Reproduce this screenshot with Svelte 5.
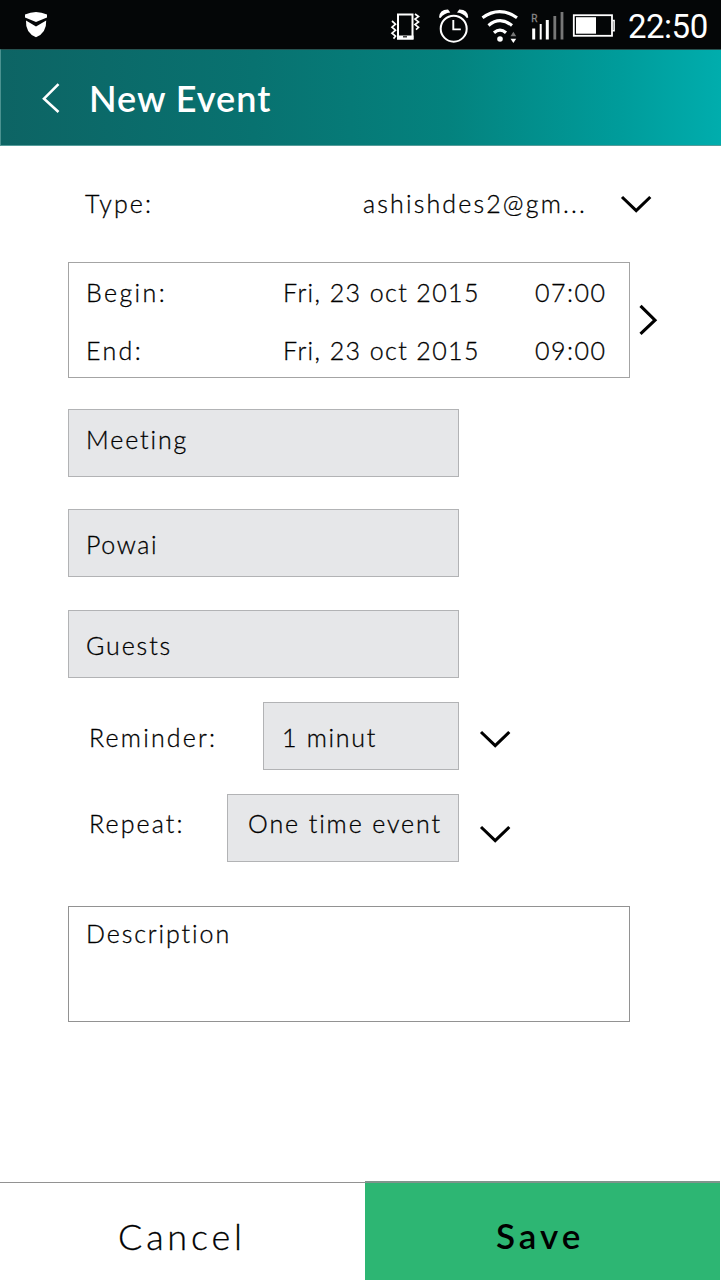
<script>
  const schedule = [
    { label: 'Begin:', date: 'Fri, 23 oct 2015', time: '07:00' },
    { label: 'End:', date: 'Fri, 23 oct 2015', time: '09:00' }
  ];
</script>

{#snippet chevron()}
  <svg class="chevron" width="32" height="20" viewBox="0 0 32 20">
    <path d="M2 2 L16.2 15.5 L30.3 2" fill="none" stroke="#000" stroke-width="3.1" />
  </svg>
{/snippet}

<div class="screen">
  <div class="status">
    <svg class="shield" width="24" height="28" viewBox="0 0 24 28" fill="#fff">
      <path d="M1 3.6 Q12 -1.4 23 3.6 V6.6 L12 11 L1 6.6 Z" />
      <path d="M2 9.4 L12 15.6 L22.2 9.4 Q22.8 21.5 12 26.3 Q1.2 21.5 2 9.4 Z" />
    </svg>
    <svg class="icons" width="230" height="36" viewBox="390 8 230 36" fill="none" stroke="#fff">
      <rect x="398" y="14.5" width="14.5" height="24" stroke-width="2" />
      <path d="M397 35.5h16.5v4h-16.5z" fill="#fff" stroke="none" />
      <path d="M403 36.8h4" stroke="#222" stroke-width="1.3" />
      <path d="M392 21l3.5 3.2-3.5 3 3.5 3-3.5 3 3.5 3-2 2.4M415 14l3.5 2.6-3.5 2.5 3.5 2.8-3.5 2.7 3.5 2.8-2.5 2.2" stroke-width="1.7" />
      <circle cx="453.7" cy="28.7" r="13" stroke-width="2" />
      <path d="M453.3 20v9.4h7.5" stroke-width="1.9" />
      <path d="M439 17.5Q439.5 9.5 448 9.6L450.3 12.5Q444 13 440.5 18Z" fill="#fff" stroke="none" />
      <path d="M468.3 17.5Q467.8 9.5 459.3 9.6L457 12.5Q463.3 13 466.8 18Z" fill="#fff" stroke="none" />
      <path d="M482.5 17.7Q499.5 5.5 517 17.7" stroke-width="3.2" />
      <path d="M488.5 25.4Q500 16 512 25.4M494 32.8Q500 27.5 506 32.8" stroke-width="3.2" />
      <circle cx="500" cy="39" r="2.8" fill="#fff" stroke="none" />
      <path d="M510.5 36.2h5.7l-2.8-4.5z" fill="#777" stroke="none" />
      <path d="M510.5 38.8h5.7l-2.8 4.2z" fill="#fff" stroke="none" />
      <path d="M533.7 28.5v11M547.3 20v19.5" stroke-width="3" />
      <path d="M540.7 24v15.5" stroke-width="2" />
      <path d="M554.8 16v23.5M562 12v27.5" stroke="#777" stroke-width="2.8" />
      <text x="531.3" y="22" class="roaming">R</text>
      <rect x="573.8" y="15.2" width="38.2" height="20.6" stroke-width="1.8" />
      <path d="M576 17.2h20v16.5h-20z" fill="#fff" stroke="none" />
      <path d="M612.5 20.4h1.6v10.4h-1.6" stroke-width="1.5" />
    </svg>
    <span class="clock">22:50</span>
  </div>

  <header>
    <svg width="20" height="32" viewBox="0 0 20 32">
      <path d="M17.5 2.2 L3 16.6 L17.5 30" fill="none" stroke="#fff" stroke-width="2.6" />
    </svg>
    <h1>New Event</h1>
  </header>

  <main>
    <div class="type">
      <span class="type-label">Type:</span>
      <span class="account">ashishdes2@gm...</span>
      {@render chevron()}
    </div>

    <div class="schedule">
      <div class="box times">
        {#each schedule as row}
          <div class="time-row">
            <span class="row-label">{row.label}</span>
            <span class="date">{row.date}</span>
            <span class="time">{row.time}</span>
          </div>
        {/each}
      </div>
      <svg width="19" height="32" viewBox="0 0 19 32">
        <path d="M1.5 1.8 L16 16.2 L1.5 29.8" fill="none" stroke="#000" stroke-width="3.1" />
      </svg>
    </div>

    <div class="field meeting"><span>Meeting</span></div>
    <div class="field powai"><span>Powai</span></div>
    <div class="field guests"><span>Guests</span></div>

    <div class="choice reminder">
      <span class="label">Reminder:</span>
      <div class="field"><span>1 minut</span></div>
      {@render chevron()}
    </div>
    <div class="choice repeat">
      <span class="label">Repeat:</span>
      <div class="field"><span>One time event</span></div>
      {@render chevron()}
    </div>

    <div class="box description"><span>Description</span></div>
  </main>

  <footer>
    <div class="cancel">Cancel</div>
    <div class="save">Save</div>
  </footer>
</div>

<style>
  :global(body) { margin: 0; background: #fff; }
  .screen {
    display: flex; flex-direction: column; box-sizing: border-box;
    width: 721px; height: 1280px; overflow: hidden; background: #fff; color: #000;
    font: 300 25px/30px Lato, sans-serif; letter-spacing: 1.9px; white-space: nowrap;
  }
  .screen svg { display: block; flex: none; }
  .status { display: flex; flex: none; box-sizing: border-box; height: 49px; padding: 8px 0 0 24px; background: #040607; color: #fff; }
  .shield { margin-top: 3px; }
  .icons { margin-left: 342px; }
  .roaming { font: 10px Roboto, sans-serif; letter-spacing: 0; fill: #888; stroke: #888; stroke-width: .3; }
  .clock { margin-left: 8px; font: 400 33px/38px Roboto, sans-serif; letter-spacing: -.5px; }
  header {
    display: flex; flex: none; box-sizing: border-box; height: 97px; padding: 32px 0 0 40px;
    border-left: 1px solid #4b9290; border-bottom: 1px solid #559c9a; border-top: 1px solid #26514f;
    background: linear-gradient(90deg, #0d6464 0%, #087270 35%, #04827e 62%, #009c9b 86%, #00adad 100%);
    color: #fff;
  }
  h1 { margin: -5px 0 0 28px; font: 600 36px/43px Lato, sans-serif; letter-spacing: 1px; }
  main {
    display: flex; flex: 1; flex-direction: column; padding: 42px 0 0 68px;
    -webkit-text-stroke: .3px #000;
  }
  .type { display: flex; height: 74px; }
  .type-label { width: 278px; padding-left: 17px; letter-spacing: 2.1px; }
  .account { width: 257px; letter-spacing: 2.15px; }
  .type .chevron { margin-top: 7px; }
  .schedule { display: flex; align-items: center; gap: 9px; }
  .box { box-sizing: border-box; width: 562px; height: 116px; border: 1px solid #a4a4a4; }
  .times { padding: 14px 0 0 17px; }
  .time-row { display: grid; grid-template-columns: 197px 252px auto; height: 58px; }
  .row-label { letter-spacing: 2.4px; }
  .date { letter-spacing: 1.4px; }
  .time { letter-spacing: 1.5px; }
  .field { box-sizing: border-box; width: 391px; height: 68px; border: 1px solid #b2b3b5; background: #e6e7e9; }
  .meeting { margin-top: 31px; padding: 14px 0 0 17px; }
  .powai { margin-top: 32px; padding: 19px 0 0 17px; letter-spacing: 1.6px; }
  .guests { margin-top: 33px; padding: 19px 0 0 17px; }
  .choice { display: flex; }
  .reminder { margin-top: 24px; }
  .repeat { margin-top: 24px; }
  .label { box-sizing: border-box; padding: 20px 0 0 21px; }
  .reminder .label { width: 195px; letter-spacing: 2.2px; }
  .reminder .field { width: 196px; padding: 19px 0 0 18px; letter-spacing: 1.7px; }
  .repeat .label { width: 159px; padding-top: 14px; letter-spacing: 2.1px; }
  .repeat .field { width: 232px; padding: 13px 0 0 20px; }
  .choice .chevron { margin: 28px 0 0 20px; }
  .repeat .chevron { margin-top: 31px; }
  .description { margin-top: 44px; padding: 11px 0 0 17px; border-color: #929292; }
  footer { display: grid; grid-template-columns: 365px 355px; flex: none; height: 99px; font-size: 36px; line-height: 42px; }
  .cancel { margin-top: 1px; border-top: 1px solid #929292; padding: 32px 0 0 118px; letter-spacing: 3.8px; -webkit-text-stroke: .3px #000; }
  .save { border-top: 2px solid #80958c; padding: 31px 0 0 131px; background: #2db673; font-weight: 600; font-size: 35px; letter-spacing: 4px; }
</style>
